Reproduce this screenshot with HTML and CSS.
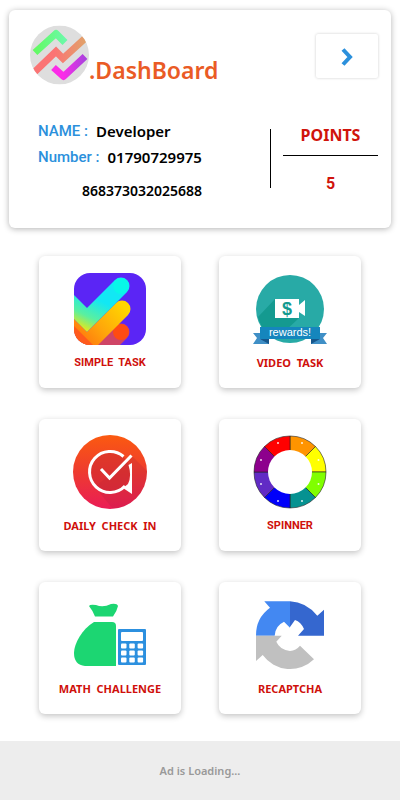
FILE: index.html
```html
<!DOCTYPE html>
<html lang="en">
<head>
    <meta charset="UTF-8">
    <meta name="viewport" content="width=device-width, initial-scale=1.0">
    <title>DashBoard</title>
    <link rel="stylesheet" href="styles.css">
</head>
<body>
    <header class="profile-card">
        <div class="brand-row">
            <svg class="logo" viewBox="0 0 59 59" aria-hidden="true">
                <defs>
                    <clipPath id="logoClip"><circle cx="29.5" cy="29.5" r="29.5"/></clipPath>
                    <linearGradient id="logoGreen"><stop offset="0" stop-color="#63fa63"/><stop offset="1" stop-color="#6cf9a8"/></linearGradient>
                    <linearGradient id="logoRed"><stop offset="0.4" stop-color="#fb7474"/><stop offset="1" stop-color="#e0a469"/></linearGradient>
                    <linearGradient id="logoPink"><stop offset="0.3" stop-color="#fb2be8"/><stop offset="1" stop-color="#ab42de"/></linearGradient>
                </defs>
                <g clip-path="url(#logoClip)" fill="none" stroke-width="7">
                    <rect width="59" height="59" fill="#dedede"/>
                    <path d="M5 27 L26 8 L35 17" stroke="url(#logoGreen)" stroke-linejoin="round"/>
                    <path d="M3 48 L26 26 L33 33 L57 11" stroke="url(#logoRed)"/>
                    <path d="M23.500 42 L33.500 51 L55 31" stroke="url(#logoPink)" stroke-linejoin="round"/>
                </g>
            </svg>
            <h1>.DashBoard</h1>
            <button class="next-btn" aria-label="Next">
                <svg viewBox="0 0 12 18" aria-hidden="true"><path d="M2 1.500 L9 9 L2 16.500" fill="none" stroke="#2b90dc" stroke-width="4"/></svg>
            </button>
        </div>
        <div class="info-row">
            <div class="user-info">
                <p><span class="field">NAME :</span> <span>Developer</span></p>
                <p><span class="field">Number :</span> <span>01790729975</span></p>
                <p class="device-id">868373032025688</p>
            </div>
            <div class="points">
                <h2>POINTS</h2>
                <p>5</p>
            </div>
        </div>
    </header>

    <main class="tasks">
        <button class="task">
            <svg viewBox="0 0 74 74" aria-hidden="true">
                <defs>
                    <clipPath id="taskClip"><rect x="1" y="1" width="72" height="72" rx="16"/></clipPath>
                    <linearGradient id="taskCyan" gradientUnits="userSpaceOnUse" x1="14" y1="62" x2="30" y2="30"><stop offset="0" stop-color="#ffe600"/><stop offset="0.45" stop-color="#5af0a0"/><stop offset="1" stop-color="#12e8f4"/></linearGradient>
                    <linearGradient id="taskYellow" gradientUnits="userSpaceOnUse" x1="5" y1="76" x2="50" y2="34"><stop offset="0" stop-color="#ff6a10"/><stop offset="0.5" stop-color="#ffa70a"/><stop offset="1" stop-color="#ffd500"/></linearGradient>
                </defs>
                <g clip-path="url(#taskClip)" fill="none" stroke-width="17" stroke-linecap="round">
                    <rect width="74" height="74" fill="#5b25f5"/>
                    <path d="M48 60 L28 80" stroke="#cf4566"/>
                    <circle cx="48" cy="60" r="8" fill="#ff4b12"/>
                    <path d="M-10 48 L14 72 L49 37" stroke="url(#taskYellow)"/>
                    <path d="M-6 59 L14 79" stroke="#ff5a1c"/>
                    <path d="M-10 24 L14 48 L48 14" stroke="url(#taskCyan)"/>
                    <circle cx="48" cy="14" r="8" fill="#08f7e8"/>
                </g>
            </svg>
            <span class="roboto">SIMPLE&nbsp; TASK</span>
        </button>

        <button class="task">
            <svg viewBox="0 0 74 74" aria-hidden="true">
                <circle cx="37" cy="37" r="34" fill="#28aaa6"/>
                <path d="M22 27 L5 45 A34 34 0 0 0 14 61 L30 61 L46 46 Z" fill="#149a90"/>
                <path d="M22 27 H46 V33 L52 28 V44 L46 40 V46 H22 Z" fill="#fff"/>
                <text x="34" y="43" class="dollar" text-anchor="middle">$</text>
                <path d="M0 61 H16 V72 H0 L4 66 Z M74 61 H58 V72 H74 L70 66 Z" fill="#3f8fc6"/>
                <path d="M7 67 H16 V72 Z M67 67 H58 V72 Z" fill="#17578c"/>
                <rect x="7" y="55" width="60" height="12" fill="#1586bd"/>
                <text x="37" y="64" class="ribbon" text-anchor="middle">rewards!</text>
            </svg>
            <span>VIDEO&nbsp; TASK</span>
        </button>

        <button class="task">
            <svg viewBox="0 0 74 74" aria-hidden="true">
                <defs>
                    <linearGradient id="checkBg" x2="0" y2="1"><stop offset="0" stop-color="#fb5a10"/><stop offset="0.5" stop-color="#ee3b2f"/><stop offset="1" stop-color="#ea1c56"/></linearGradient>
                    <clipPath id="checkClip"><circle cx="37" cy="37" r="37"/></clipPath>
                </defs>
                <g clip-path="url(#checkClip)">
                    <rect width="74" height="74" fill="url(#checkBg)"/>
                    <path d="M59 21 L74 36 V74 H40 L22 52 Z" fill="#a71d3c" opacity="0.2"/>
                    <circle cx="37" cy="37" r="20" fill="#c9272f" opacity="0.5"/>
                </g>
                <g fill="none" stroke="#fff" stroke-width="3">
                    <path d="M50.500 21.500 A20.500 20.500 0 1 0 52 51"/>
                    <path d="M28 34 L36.500 43 L58.500 20.500"/>
                </g>
                <path d="M55.500 30 L59 28 V59 L50 53 L55 49 Q59 41 55.500 30 Z" fill="#fff"/>
            </svg>
            <span>DAILY&nbsp; CHECK&nbsp; IN</span>
        </button>

        <button class="task">
            <svg viewBox="0 0 74 74" aria-hidden="true">
                <g stroke="#222" stroke-width="0.600">
                    <path d="M37 37 V1 A36 36 0 0 1 62.500 11.500 Z" fill="#ff9400"/>
                    <path d="M37 37 L62.500 11.500 A36 36 0 0 1 73 37 Z" fill="#ffff00"/>
                    <path d="M37 37 H73 A36 36 0 0 1 62.500 62.500 Z" fill="#80ff00"/>
                    <path d="M37 37 L62.500 62.500 A36 36 0 0 1 37 73 Z" fill="#069291"/>
                    <path d="M37 37 V73 A36 36 0 0 1 11.500 62.500 Z" fill="#0000fa"/>
                    <path d="M37 37 L11.500 62.500 A36 36 0 0 1 1 37 Z" fill="#612bc5"/>
                    <path d="M37 37 H1 A36 36 0 0 1 11.500 11.500 Z" fill="#8d008d"/>
                    <path d="M37 37 L11.500 11.500 A36 36 0 0 1 37 1 Z" fill="#ff0000"/>
                </g>
                <circle cx="37" cy="37" r="22" fill="#fff"/>
                <g fill="#fff" fill-opacity="0.850">
                    <circle cx="49" cy="8" r="1"/><circle cx="65.500" cy="25" r="1"/>
                    <circle cx="65.500" cy="49" r="1"/><circle cx="49" cy="66" r="1"/>
                    <circle cx="25" cy="66" r="1"/><circle cx="8" cy="49" r="1"/>
                    <circle cx="8" cy="25" r="1"/><circle cx="25" cy="8" r="1"/>
                </g>
            </svg>
            <span class="roboto">SPINNER</span>
        </button>

        <button class="task">
            <svg viewBox="0 0 74 74" aria-hidden="true">
                <path d="M16 8 Q17 6 23 7 Q30 10 38 6 Q44 5 45 8 Q44 13 40 18.500 H22 Q20 13 16 8 Z" fill="#1cd672"/>
                <path d="M21 24 H39 Q43 24 43 28 V68 H12 Q1 67 1 55 C1 46 9 31 21 24 Z" fill="#1cd672"/>
                <rect x="45" y="31" width="28" height="36" rx="1" fill="#2c90df"/>
                <g fill="#fff">
                    <rect x="48" y="34" width="22" height="9" rx="1"/>
                    <rect x="48" y="45.500" width="5.500" height="5" rx="1"/><rect x="56.300" y="45.500" width="5.500" height="5" rx="1"/><rect x="64.600" y="45.500" width="5.500" height="5" rx="1"/>
                    <rect x="48" y="52.500" width="5.500" height="5" rx="1"/><rect x="56.300" y="52.500" width="5.500" height="5" rx="1"/><rect x="64.600" y="52.500" width="5.500" height="5" rx="1"/>
                    <rect x="48" y="59.500" width="5.500" height="5" rx="1"/><rect x="56.300" y="59.500" width="5.500" height="5" rx="1"/><rect x="64.600" y="59.500" width="5.500" height="5" rx="1"/>
                </g>
            </svg>
            <span>MATH&nbsp; CHALLENGE</span>
        </button>

        <button class="task">
            <svg viewBox="0 0 74 74" aria-hidden="true">
                <path d="M3 37.700 A34 34 0 0 1 17 9.700 L11.300 3.300 H37 V29.700 L31 23.700 Q22 28 21.700 37.700 Z" fill="#4388f2"/>
                <path d="M37 3.300 Q53 4 64.300 17.700 L71 11.700 V37.700 H45 L51 31 Q48 24 42 22 L37 29 Z" fill="#3567cf"/>
                <path d="M3 37.700 H28.700 L23.300 43.700 Q27 52 37 53 Q43 52.500 47 47.700 L61 61.300 A34 34 0 0 1 9.700 57 L3 63 Z" fill="#c0c0c0"/>
            </svg>
            <span>RECAPTCHA</span>
        </button>
    </main>

    <footer class="ad-bar">Ad is Loading...</footer>
</body>
</html>
```

FILE: styles.css
```css
* {
    box-sizing: border-box;
}

body {
    font-family: 'Noto Sans', 'Open Sans', sans-serif;
    margin: 0;
    min-height: 100vh;
    display: flex;
    flex-direction: column;
    background: white;
}

h1, h2, p {
    margin: 0;
}

button {
    border: none;
    padding: 0;
    background: white;
    font-family: inherit;
    cursor: pointer;
}

.profile-card {
    margin: 10px 9px 0;
    padding: 15px 13px 24px 21px;
    border-radius: 6px;
    box-shadow: 0 1px 6px rgba(0,0,0,0.3);
}

.brand-row {
    display: flex;
    align-items: flex-end;
    height: 60px;
}

.logo {
    width: 59px;
    height: 60px;
}

h1 {
    color: #ea5b25;
    font-size: 23px;
    line-height: 30px;
    font-weight: 600;
}

.next-btn {
    align-self: flex-start;
    width: 62px;
    height: 44px;
    margin: 9px 0 0 auto;
    border-radius: 2px;
    box-shadow: 0 0 3px rgba(0,0,0,0.2);
}

.next-btn svg {
    width: 12px;
    height: 18px;
    vertical-align: middle;
}

.info-row {
    display: flex;
    justify-content: space-between;
    margin-top: 33px;
    padding-left: 8px;
}

.user-info {
    font-size: 15px;
    line-height: 26px;
    font-weight: 600;
}

.user-info p {
    display: flex;
    gap: 8px;
}

.user-info .field {
    color: #2b90dc;
    font-family: Roboto, sans-serif;
    font-weight: 500;
}

.user-info .device-id {
    margin-top: 8px;
    padding-left: 44px;
    font-size: 14px;
}

.points {
    width: 108px;
    height: 59px;
    margin-top: 11px;
    padding-left: 12px;
    border-left: 1px solid black;
    color: #d0140c;
    text-align: center;
}

.points h2 {
    height: 27px;
    border-bottom: 1px solid black;
    font-size: 16px;
    line-height: 12px;
}

.points p {
    margin-top: 18px;
    font-family: Roboto, sans-serif;
    font-size: 16px;
    line-height: 20px;
    font-weight: bold;
}

.tasks {
    display: grid;
    grid-template-columns: 1fr 1fr;
    gap: 31px 38px;
    padding: 28px 39px 27px;
}

.task {
    display: flex;
    flex-direction: column;
    align-items: center;
    height: 132px;
    padding-top: 16px;
    border-radius: 6px;
    box-shadow: 0 2px 6px rgba(0,0,0,0.24);
    color: #cf100b;
    font-size: 11px;
    line-height: 16px;
    font-weight: bold;
}

.task svg {
    width: 74px;
    height: 74px;
    margin-bottom: 9px;
}

.task .roboto {
    font-family: Roboto, sans-serif;
}

.dollar {
    fill: #149a90;
    font-family: 'Liberation Sans', sans-serif;
    font-size: 18px;
}

.ribbon {
    fill: white;
    font-family: 'Liberation Sans', sans-serif;
    font-size: 11px;
    font-weight: normal;
}

.ad-bar {
    margin-top: auto;
    padding: 20px;
    background: #ededed;
    color: #999;
    text-align: center;
    font-size: 11px;
    line-height: 19px;
    font-weight: 600;
}
```
